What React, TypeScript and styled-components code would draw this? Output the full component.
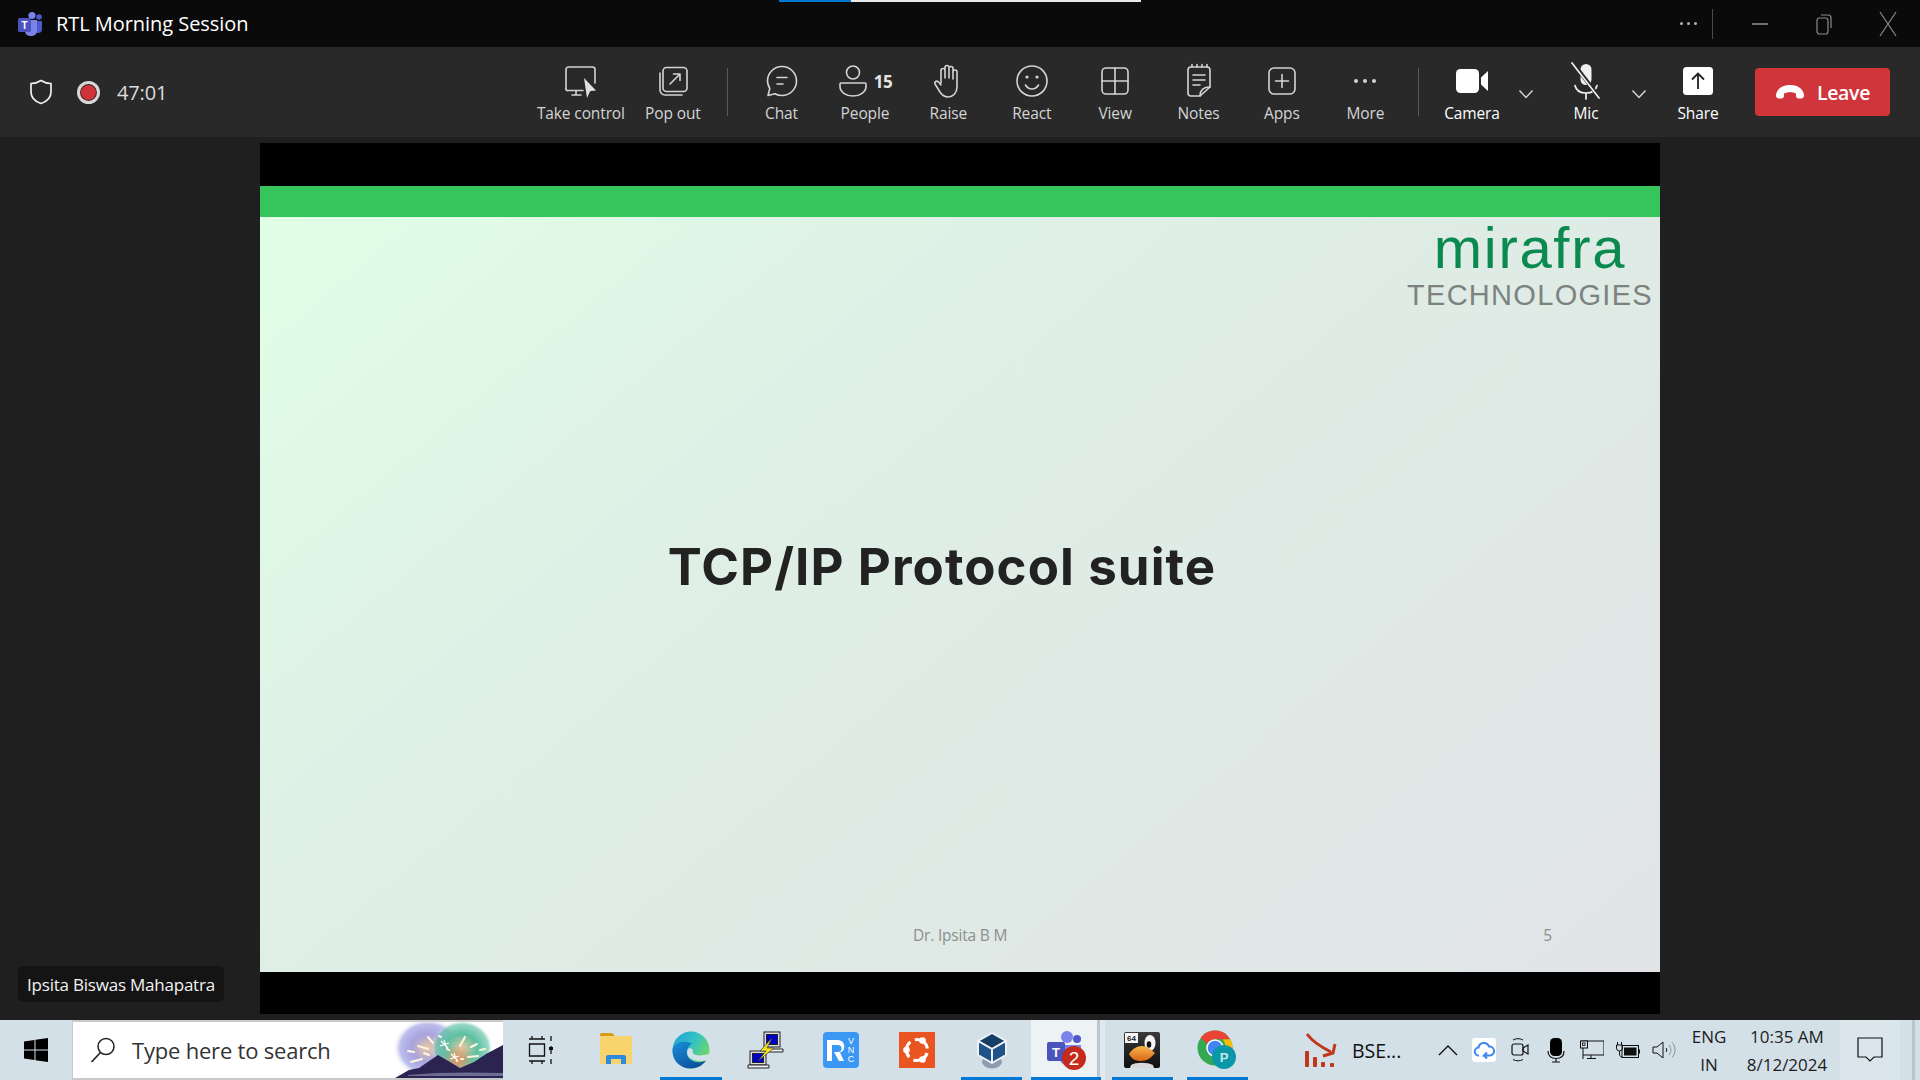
import React from "react";
import styled, { createGlobalStyle } from "styled-components";

const UI_FONT = `"Open Sans", "Noto Sans", "Liberation Sans", sans-serif`;

const GlobalStyle = createGlobalStyle`
  html, body {
    margin: 0;
    padding: 0;
    background: #1f1f1f;
  }
  * {
    box-sizing: border-box;
  }
`;

const Page = styled.div`
  width: 1920px;
  height: 1080px;
  display: flex;
  flex-direction: column;
  overflow: hidden;
  font-family: ${UI_FONT};
`;

const TitleBar = styled.header`
  position: relative;
  height: 47px;
  flex: none;
  display: flex;
  align-items: center;
  padding-left: 17px;
  background: #0a0a0a;
  color: #fff;
`;

const ShareProgress = styled.div`
  position: absolute;
  top: 0;
  left: 779px;
  width: 362px;
  height: 2px;
  background: linear-gradient(to right, #0078d4 0 72px, #e8e8e8 72px);
`;

const TitleText = styled.span`
  margin-left: 13px;
  font-size: 20px;
  letter-spacing: -0.05px;
`;

const WindowControls = styled.div`
  margin-left: auto;
  display: flex;
  align-items: center;
  height: 100%;
`;

const WindowDivider = styled.div`
  width: 1px;
  height: 30px;
  background: #4a4a4a;
  margin: 0 15px 0 14px;
`;

const WindowButton = styled.div<{ $auto?: boolean }>`
  width: ${(p) => (p.$auto ? "auto" : "64px")};
  display: flex;
  justify-content: center;
  align-items: center;
  color: ${(p) => (p.$auto ? "#b0b0b0" : "#8a8a8a")};
`;

const Toolbar = styled.div`
  height: 90px;
  flex: none;
  display: flex;
  align-items: center;
  padding: 0 30px 0 29px;
  background: #292929;
  color: #d4d4d4;
`;

const MeetingInfo = styled.div`
  display: flex;
  align-items: center;
  gap: 17px;
  font-size: 20px;
  letter-spacing: -0.15px;
  color: #dcdcdc;
`;

const RecordDot = styled.div`
  width: 23px;
  height: 23px;
  border-radius: 50%;
  border: 3px solid #d8d8d8;
  background: #d13438;
  margin-left: 7px;
  box-shadow: inset 0 0 0 1px #292929;
`;

const ToolGroup = styled.div`
  margin-left: auto;
  display: flex;
  align-items: stretch;
  height: 72px;
`;

const ToolButton = styled.div<{ $w?: number; $on?: boolean; $pull?: number; $push?: number }>`
  width: ${(p) => p.$w ?? 83.4}px;
  flex: none;
  display: flex;
  flex-direction: column;
  align-items: center;
  margin: 0 ${(p) => p.$pull ?? 0}px 0 ${(p) => p.$push ?? 0}px;
  color: ${(p) => (p.$on ? "#fff" : "#d4d4d4")};
  font-size: 15.5px;
  letter-spacing: -0.12px;
  font-weight: ${(p) => (p.$on ? 500 : 400)};
`;

const ToolIcon = styled.div`
  height: 40px;
  margin-top: 5px;
  display: flex;
  align-items: center;
  justify-content: center;
  gap: 6px;
`;

const ToolLabel = styled.span`
  margin-top: 2px;
  line-height: 20px;
  white-space: nowrap;
`;

const PeopleCount = styled.span`
  font-size: 17px;
  font-weight: 700;
  color: #e4e4e4;
  letter-spacing: -0.4px;
`;

const ToolDivider = styled.div<{ $l: number; $r: number }>`
  width: 1px;
  height: 48px;
  align-self: center;
  background: #5a5a5a;
  margin: 0 ${(p) => p.$r}px 0 ${(p) => p.$l}px;
`;

const Chevron = styled.div<{ $w: number }>`
  width: ${(p) => p.$w}px;
  flex: none;
  display: flex;
  justify-content: center;
  padding-top: 33px;
`;

const LeaveButton = styled.div`
  width: 135px;
  height: 48px;
  margin: 12px 0 0 15px;
  align-self: flex-start;
  display: flex;
  align-items: center;
  justify-content: center;
  gap: 12px;
  border-radius: 4px;
  background: #d0353c;
  color: #fff;
  font-size: 19.5px;
  font-weight: 600;
  letter-spacing: -0.35px;
`;

const Stage = styled.main`
  position: relative;
  flex: 1;
  display: flex;
  justify-content: center;
  padding: 6px 0;
  background: #1f1f1f;
`;

const Slide = styled.section`
  width: 1400px;
  display: flex;
  flex-direction: column;
  background: #000;
  padding: 42px 0;
`;

const GreenBand = styled.div`
  height: 31px;
  flex: none;
  margin-top: 1px;
  background: #36c45c;
`;

const SlideBody = styled.div`
  flex: 1;
  display: flex;
  flex-direction: column;
  background: linear-gradient(140deg, #e0ffe6 0%, #dff0e6 34%, #dfe9e5 68%, #e2e4e8 100%);
`;

const BrandBlock = styled.div`
  align-self: flex-end;
  display: flex;
  flex-direction: column;
  align-items: center;
  padding: 1px 7px 0 0;
  font-family: "Liberation Sans", sans-serif;
`;

const BrandName = styled.div`
  font-size: 58px;
  line-height: 60px;
  letter-spacing: 1.7px;
  color: #0b8a50;
`;

const BrandSub = styled.div`
  font-size: 29px;
  line-height: 34px;
  letter-spacing: 1.3px;
  color: #7d8280;
`;

const SlideTitle = styled.h1`
  margin: 222px 0 0 -36px;
  text-align: center;
  font-family: Inter, Lato, sans-serif;
  font-size: 51px;
  line-height: 66px;
  font-weight: 700;
  letter-spacing: 1.1px;
  color: #222;
`;

const SlideFooter = styled.div`
  margin-top: auto;
  display: flex;
  justify-content: space-between;
  padding: 0 108px 27px 653px;
  font-size: 15.5px;
  line-height: 20px;
  letter-spacing: -0.2px;
  color: #8b8f8e;
`;

const NameTag = styled.div`
  position: absolute;
  left: 18px;
  bottom: 18px;
  height: 36px;
  width: 206px;
  display: flex;
  align-items: center;
  justify-content: center;
  border-radius: 5px;
  background: #141414;
  color: #f2f2f2;
  font-size: 17px;
  letter-spacing: -0.22px;
`;

const Taskbar = styled.footer`
  height: 60px;
  flex: none;
  display: flex;
  align-items: stretch;
  background: #d3e0e8;
  color: #1a1a1a;
`;

const StartButton = styled.div`
  width: 72px;
  flex: none;
  display: flex;
  align-items: center;
  justify-content: center;
`;

const SearchBox = styled.div`
  position: relative;
  width: 431px;
  flex: none;
  display: flex;
  align-items: center;
  padding-left: 17px;
  gap: 16px;
  background: #fff;
  border: 2px solid #c9c9c9;
  border-right: none;
  border-left-width: 1px;
  overflow: hidden;
  color: #333;
  font-size: 22px;
  letter-spacing: -0.2px;
`;

const SearchArt = styled.div`
  position: absolute;
  right: 0;
  top: 0;
  bottom: 0;
  display: flex;
`;

const TaskSlot = styled.div<{ $run?: boolean; $active?: boolean }>`
  position: relative;
  width: 75.2px;
  flex: none;
  display: flex;
  align-items: center;
  justify-content: center;
  background: ${(p) =>
    p.$active
      ? "linear-gradient(to right, transparent 2px, #edf2f5 2px, #edf2f5 68px, #bcc8d0 68px, #bcc8d0 71px, #dfe9ef 71px)"
      : "none"};

  &::after {
    content: "";
    display: ${(p) => (p.$run || p.$active ? "block" : "none")};
    position: absolute;
    left: ${(p) => (p.$active ? 2 : 7)}px;
    right: ${(p) => (p.$active ? 4 : 7)}px;
    bottom: 0;
    height: 3px;
    background: #0078d4;
  }
`;

const BseSlot = styled.div`
  margin-left: 49px;
  display: flex;
  align-items: center;
  gap: 12px;
  font-size: 19.5px;
  color: #111;
`;

const Tray = styled.div`
  margin-left: auto;
  display: flex;
  align-items: stretch;
`;

const TrayIcon = styled.div`
  width: 36px;
  display: flex;
  align-items: center;
  justify-content: center;
`;

const TrayText = styled.div<{ $w: number }>`
  width: ${(p) => p.$w}px;
  display: flex;
  flex-direction: column;
  align-items: center;
  justify-content: center;
  gap: 3px;
  font-size: 17px;
  line-height: 25px;
  color: #1c1c1c;
  letter-spacing: 0;
`;

const NotifyButton = styled.div`
  width: 60px;
  margin-left: 2px;
  display: flex;
  align-items: center;
  justify-content: center;
  background: #dbe6ec;
`;

const DesktopPeek = styled.div`
  width: 20px;
  background: linear-gradient(to right, #d3e0e8 12px, #bac6cd 12px, #bac6cd 15px, #d3e0e8 15px);
`;

const stroke = {
  fill: "none",
  stroke: "currentColor",
  strokeWidth: 1.6,
  strokeLinecap: "round" as const,
  strokeLinejoin: "round" as const,
};

const TeamsLogo = ({ size = 26 }: { size?: number }) => (
  <svg width={size} height={size} viewBox="0 0 26 26">
    <circle cx="15" cy="4.5" r="3.6" fill="#7b83eb" />
    <circle cx="22" cy="6" r="2.8" fill="#5059c9" />
    <path d="M17 10h8v8a4 4 0 0 1-4 4h-1l-3-2z" fill="#5059c9" />
    <path d="M8 9h12v11a5 5 0 0 1-5 5h-2a5 5 0 0 1-5-5z" fill="#7b83eb" />
    <rect x="1" y="7" width="13" height="14" rx="1.5" fill="#4b53bc" />
    <text x="7.5" y="18" textAnchor="middle" fontSize="10" fontWeight="700" fontFamily="Liberation Sans" fill="#fff">T</text>
  </svg>
);

const TakeControlIcon = () => (
  <svg width="36" height="36" viewBox="0 0 36 36">
    <path {...stroke} d="M3 26V6.500A2.500 2.500 0 0 1 5.500 4h24A2.500 2.500 0 0 1 32 6.500V20" />
    <path {...stroke} d="M3 26a1.500 1.500 0 0 0 2 1.500h15M13 27.500V32M9 32h9" />
    <path d="M21 15l12 12.500-5 .5-1 .5L24 35z" fill="#e0e0e0" />
  </svg>
);

const PopOutIcon = () => (
  <svg width="34" height="34" viewBox="0 0 34 34">
    <rect {...stroke} x="7" y="3.500" width="24" height="24" rx="3.500" />
    <path {...stroke} d="M4 9v17a5 5 0 0 0 5 5h17" />
    <path {...stroke} d="M14 20L24 10M17.500 10H24v6.500" />
  </svg>
);

const ChatIcon = () => (
  <svg width="34" height="34" viewBox="0 0 34 34">
    <path {...stroke} d="M17 2.500c8 0 14.500 6.500 14.500 14.500S25 31.500 17 31.500c-2.500 0-5-.6-7-1.800L3 31.500l1.800-7C3.500 22.300 2.500 19.700 2.500 17 2.500 9 9 2.500 17 2.500z" />
    <path {...stroke} d="M12 13.500h10M12 20h6" />
  </svg>
);

const PersonIcon = () => (
  <svg width="30" height="34" viewBox="0 0 30 34">
    <circle {...stroke} cx="15" cy="8.500" r="6.500" />
    <path {...stroke} d="M3 19h24a1 1 0 0 1 1 1v2.500C28 28 22 32 15 32S2 28 2 22.500V20a1 1 0 0 1 1-1z" />
  </svg>
);

const HandIcon = () => (
  <svg width="30" height="36" viewBox="0 0 30 36">
    <path {...stroke} d="M8 20V7.500a2 2 0 0 1 4 0V15M12 15V4.500a2 2 0 0 1 4 0V15M16 15V5.500a2 2 0 0 1 4 0V16M20 16V9a2 2 0 0 1 4 0v15c0 6-4 10-9 10-4 0-6-2-8-5l-5-8c-1-2 1.500-4 3.500-2L8 22" />
  </svg>
);

const SmileIcon = () => (
  <svg width="34" height="34" viewBox="0 0 34 34">
    <circle {...stroke} cx="17" cy="17" r="15" />
    <circle cx="12" cy="13" r="1.600" fill="currentColor" />
    <circle cx="22" cy="13" r="1.600" fill="currentColor" />
    <path {...stroke} d="M10.500 21c1.500 2.500 4 4 6.500 4s5-1.500 6.500-4" />
  </svg>
);

const GridIcon = () => (
  <svg width="32" height="32" viewBox="0 0 32 32">
    <rect {...stroke} x="3" y="3" width="26" height="26" rx="4" />
    <path {...stroke} d="M16 3v26M3 16h26" />
  </svg>
);

const NotesIcon = () => (
  <svg width="30" height="36" viewBox="0 0 30 36">
    <path {...stroke} d="M16 33H7a3 3 0 0 1-3-3V7a3 3 0 0 1 3-3h16a3 3 0 0 1 3 3v17z" />
    <path {...stroke} d="M8 1.500V4M13 1.500V4M18 1.500V4M23 1.500V4M9 12h12M9 17h12M9 22h7M16 33c0-5 3-9 10-9" />
  </svg>
);

const PlusSquareIcon = () => (
  <svg width="32" height="32" viewBox="0 0 32 32">
    <rect {...stroke} x="3" y="3" width="26" height="26" rx="5" />
    <path {...stroke} d="M16 9.500v13M9.500 16h13" />
  </svg>
);

const DotsIcon = ({ r = 2, gap = 9 }: { r?: number; gap?: number }) => (
  <svg width={gap * 2 + r * 2 + 2} height={r * 2 + 2}>
    {[0, 1, 2].map((i) => (
      <circle key={i} cx={r + 1 + i * gap} cy={r + 1} r={r} fill="currentColor" />
    ))}
  </svg>
);

const CameraIcon = () => (
  <svg width="34" height="26" viewBox="0 0 34 26">
    <rect x="1" y="1" width="23" height="24" rx="4.500" fill="#fff" />
    <path d="M26 9.500L33 3v20l-7-6.500z" fill="#fff" />
  </svg>
);

const MicOffIcon = () => (
  <svg width="32" height="38" viewBox="0 0 32 38">
    <rect x="10.500" y="2" width="11" height="21" rx="5.500" fill="#f0f0f0" />
    <path d="M5 23.500C6 28 10 31 16 31s10-3 11-7.500M16 31v6" fill="none" stroke="#f0f0f0" strokeWidth="1.700" strokeLinecap="round" />
    <path d="M3 1l26 34" stroke="#292929" strokeWidth="4" />
    <path d="M2 1l27 35" stroke="#f0f0f0" strokeWidth="1.700" strokeLinecap="round" />
  </svg>
);

const ShareIcon = () => (
  <svg width="32" height="30" viewBox="0 0 32 30">
    <rect x="1" y="1" width="30" height="28" rx="3.500" fill="#fff" />
    <path d="M16 23V8M10 13.500L16 7.500l6 6" fill="none" stroke="#222" strokeWidth="1.800" />
  </svg>
);

const SmallChevron = () => (
  <svg width="16" height="10" viewBox="0 0 16 10">
    <path d="M1.500 1.500L8 8.500l6.500-7" fill="none" stroke="#d8d8d8" strokeWidth="1.400" />
  </svg>
);

const HangUpIcon = () => (
  <svg width="30" height="16" viewBox="0 0 30 16">
    <path d="M1 11C2 4 8 1 15 1s13 3 14 10c.3 2-1 3.500-3 3.500h-2.500c-1.500 0-2.500-1-2.500-2.500V9.500C19 8.500 17 8 15 8s-4 .5-6 1.500V12c0 1.500-1 2.500-2.500 2.500H4c-2 0-3.300-1.500-3-3.500z" fill="#fff" />
  </svg>
);

const ShieldIcon = () => (
  <svg width="24" height="26" viewBox="0 0 24 26">
    <path d="M12 1.500c3 2 6 3 10 3v8.500c0 5.500-4 9.500-10 11.500C6 22.500 2 18.500 2 13V4.500c4 0 7-1 10-3z" fill="none" stroke="#f0f0f0" strokeWidth="1.700" strokeLinejoin="round" />
  </svg>
);

const WindowsLogo = () => (
  <svg width="24" height="24" viewBox="0 0 24 24">
    <path d="M0 3.500l10.500-1.500v9.500H0zM11.500 1.800L24 0v11.500H11.500zM0 12.500h10.500V22L0 20.500zM11.500 12.500H24V24l-12.500-1.800z" fill="#000" />
  </svg>
);

const SearchGlass = () => (
  <svg width="26" height="26" viewBox="0 0 26 26">
    <circle cx="16" cy="9.500" r="8" fill="none" stroke="#222" strokeWidth="1.500" />
    <path d="M10.500 15.500L1.500 25" stroke="#222" strokeWidth="1.700" />
  </svg>
);

const SPARKS = [
  [28, 24, 38, 27],
  [38, 15, 43, 21],
  [21, 40, 32, 37],
  [18, 29, 24, 30],
  [34, 31, 39, 33],
  [70, 24, 75, 15],
  [81, 25, 87, 22],
  [90, 28, 95, 27],
  [78, 35, 88, 34],
  [49, 14, 51, 15],
  [57, 27, 59, 28],
  [71, 37, 73, 37],
];

const SearchIllustration = () => (
  <svg width="113" height="56" viewBox="0 0 113 56">
    <defs>
      <radialGradient id="glowA">
        <stop offset="0" stopColor="#e9c9a5" />
        <stop offset=".45" stopColor="#a9a4dd" />
        <stop offset=".8" stopColor="#8f93de" stopOpacity=".6" />
        <stop offset="1" stopColor="#fff" stopOpacity="0" />
      </radialGradient>
      <radialGradient id="glowB">
        <stop offset="0" stopColor="#e6c9a4" />
        <stop offset=".5" stopColor="#5cc0a0" />
        <stop offset=".85" stopColor="#62c2a8" stopOpacity=".65" />
        <stop offset="1" stopColor="#fff" stopOpacity="0" />
      </radialGradient>
      <radialGradient id="glowC">
        <stop offset="0" stopColor="#f09060" />
        <stop offset="1" stopColor="#f09060" stopOpacity="0" />
      </radialGradient>
    </defs>
    <ellipse cx="38" cy="26" rx="35" ry="30" fill="url(#glowA)" />
    <ellipse cx="72" cy="26" rx="31" ry="28" fill="url(#glowB)" />
    <circle cx="68" cy="38" r="15" fill="url(#glowC)" />
    {SPARKS.map(([x1, y1, x2, y2], i) => (
      <line key={i} x1={x1} y1={y1} x2={x2} y2={y2} stroke="#fff6df" strokeWidth="2" strokeLinecap="round" />
    ))}
    <path d="M54 18l3 9M50 24l9-3M51 19l7 7M64 31l3 9M60 37l9-3M61 32l7 7" stroke="#fff" strokeWidth="1.200" />
    <path d="M5 56l14-8 10-2 19-13 12 7 10 6 14-6 12-8 17-9v33z" fill="#2b2350" />
    <path d="M18 53c30-3 62-3 95-2v3H18z" fill="#6d6c92" />
  </svg>
);

const TaskViewIcon = () => (
  <svg width="26" height="30" viewBox="0 0 26 30">
    <path d="M1 4h16M4 1v3M14 1v3M1.500 9h15v12h-15zM1 26h16M4 26v3M14 26v3" fill="none" stroke="#111" strokeWidth="1.300" />
    <path d="M23 1v5M23 24v5M23 11v8" stroke="#111" strokeWidth="1.300" />
    <rect x="21" y="12" width="4" height="3" fill="#111" />
  </svg>
);

const FolderIcon = () => (
  <svg width="34" height="36" viewBox="0 0 34 36">
    <path d="M1 3a2 2 0 0 1 2-2h10l3 3h-15z" fill="#d99c0e" />
    <rect x="1" y="4" width="32" height="28" rx="2" fill="#f9d36b" />
    <path d="M7 32v-7a2 2 0 0 1 2-2h16a2 2 0 0 1 2 2v7z" fill="#2d8ce0" />
    <rect x="12" y="27" width="10" height="5" fill="#f9d36b" />
  </svg>
);

const EdgeIcon = () => (
  <svg width="38" height="38" viewBox="0 0 38 38">
    <defs>
      <linearGradient id="edgeTop" x1="0" y1="0" x2="1" y2=".6">
        <stop offset="0" stopColor="#1f9fdc" />
        <stop offset=".55" stopColor="#35c3c0" />
        <stop offset="1" stopColor="#74d85f" />
      </linearGradient>
      <linearGradient id="edgeLow" x1="0" y1="0" x2=".7" y2="1">
        <stop offset="0" stopColor="#1a8fd8" />
        <stop offset="1" stopColor="#0b4f9c" />
      </linearGradient>
    </defs>
    <circle cx="19" cy="19" r="18.500" fill="url(#edgeTop)" />
    <path d="M.5 20c0 10 8 17.500 18 17.500 6.500 0 12-3 15.500-8-6 3-13 2-17-2-4-5-2-12 3-15C11 8.500 .5 12 .5 20z" fill="url(#edgeLow)" />
    <path d="M18 20c-1 6 6 9 19 6" fill="none" stroke="#d3e0e8" strokeWidth="5.500" strokeLinecap="round" />
  </svg>
);

const PuttyIcon = () => (
  <svg width="38" height="38" viewBox="0 0 38 38">
    <g stroke="#222" strokeWidth="1">
      <rect x="17" y="1" width="16" height="15" fill="#dcdcdc" />
      <rect x="19.500" y="3.500" width="11" height="10" fill="#0000c8" />
      <path d="M15 18h21v3H15z" fill="#eee" />
      <rect x="3" y="20" width="16" height="14" fill="#dcdcdc" />
      <rect x="5.500" y="22.500" width="11" height="9" fill="#0000c8" />
      <path d="M1 34h21v3H1z" fill="#eee" />
    </g>
    <path d="M25 7L13 20h6L11 30l16-13h-7l5-10z" fill="#f5e11d" stroke="#333" strokeWidth=".6" />
  </svg>
);

const RvncIcon = () => (
  <svg width="36" height="36" viewBox="0 0 36 36">
    <rect width="36" height="36" rx="4" fill="#3a97f4" />
    <path d="M4 8h11a6.500 6.500 0 0 1 2 12.600L21 29h-5l-5-9h4a2 2 0 0 0 0-7H9v16H4z" fill="#fff" />
    <text x="28" y="12" textAnchor="middle" fontSize="9" fontFamily="Liberation Sans" fill="#fff">V</text>
    <text x="28" y="21" textAnchor="middle" fontSize="9" fontFamily="Liberation Sans" fill="#fff">N</text>
    <text x="28" y="30" textAnchor="middle" fontSize="9" fontFamily="Liberation Sans" fill="#fff">C</text>
  </svg>
);

const UbuntuIcon = () => (
  <svg width="36" height="36" viewBox="0 0 36 36">
    <rect width="36" height="36" fill="#e95420" />
    <circle cx="18" cy="18" r="10.500" fill="none" stroke="#fff" strokeWidth="3.200" strokeDasharray="17 5" strokeDashoffset="-3" />
    <circle cx="7.500" cy="18" r="3.300" fill="#fff" />
    <circle cx="23.500" cy="8.500" r="3.300" fill="#fff" />
    <circle cx="23.500" cy="27.500" r="3.300" fill="#fff" />
  </svg>
);

const VirtualBoxIcon = () => (
  <svg width="32" height="38" viewBox="0 0 32 38">
    <ellipse cx="16" cy="31" rx="10" ry="6.500" fill="#8f9cad" />
    <path d="M16 2l14 8v14l-14 8-14-8V10z" fill="#1c4a7a" />
    <path d="M16 2l14 8-14 8-14-8z" fill="#173c66" stroke="#eef2f5" strokeWidth="2" strokeLinejoin="round" />
    <path d="M2 10l14 8v14L2 24zM30 10l-14 8v14l14-8z" fill="#1f5488" stroke="#eef2f5" strokeWidth="2" strokeLinejoin="round" />
  </svg>
);

const TeamsTaskIcon = () => (
  <svg width="40" height="40" viewBox="0 0 40 40">
    <circle cx="20" cy="7" r="6" fill="#7b83eb" />
    <circle cx="30" cy="9" r="4" fill="#5059c9" />
    <path d="M12 15h22v12a8 8 0 0 1-8 8h-6a8 8 0 0 1-8-8z" fill="#7b83eb" />
    <rect x="0" y="12" width="18" height="19" rx="2" fill="#4b53bc" />
    <text x="9" y="26.500" textAnchor="middle" fontSize="13" fontWeight="700" fontFamily="Liberation Sans" fill="#fff">T</text>
    <circle cx="27" cy="28" r="12" fill="#c42b1c" />
    <text x="27" y="35" textAnchor="middle" fontSize="19" fontFamily="Liberation Sans" fill="#fff">2</text>
  </svg>
);

const TuxIcon = () => (
  <svg width="36" height="36" viewBox="0 0 36 36">
    <defs>
      <linearGradient id="tuxBg" x1="0" y1="0" x2="0" y2="1">
        <stop offset="0" stopColor="#3a3a3a" />
        <stop offset="1" stopColor="#0e0e0e" />
      </linearGradient>
      <linearGradient id="tuxBeak" x1="0" y1="0" x2="0" y2="1">
        <stop offset="0" stopColor="#f7b84a" />
        <stop offset="1" stopColor="#d9661a" />
      </linearGradient>
    </defs>
    <rect width="36" height="36" rx="2" fill="url(#tuxBg)" />
    <ellipse cx="26" cy="11" rx="5.500" ry="8" fill="#f4f4f4" />
    <ellipse cx="25" cy="12.500" rx="2.300" ry="3.300" fill="#111" />
    <path d="M5 22c3-5 8-8 13-8s8 3 13 7c-4 5-8 8-14 8S8 27 5 22z" fill="url(#tuxBeak)" />
    <path d="M7 33c5-3 16-3 22 0l1 3H6z" fill="#d8d8d8" />
    <rect x="1" y="1" width="13" height="10" fill="#f5f5f5" />
    <text x="7.500" y="9" textAnchor="middle" fontSize="8" fontWeight="700" fontFamily="Liberation Sans" fill="#222">64</text>
  </svg>
);

const ChromeIcon = () => (
  <svg width="40" height="40" viewBox="0 0 40 40">
    <circle cx="18" cy="18" r="17.500" fill="#34a853" />
    <path d="M18 .5A17.500 17.500 0 0 1 33.200 9.300H18a9 9 0 0 0-8 4.500L3.600 8A17.500 17.500 0 0 1 18 .5z" fill="#ea4335" />
    <path d="M33.200 9.300A17.500 17.500 0 0 1 18 35.500l7.500-13a9 9 0 0 0 .3-13z" fill="#fbbc05" />
    <circle cx="18" cy="18" r="8" fill="#4285f4" stroke="#fff" strokeWidth="1.500" />
    <circle cx="27" cy="27" r="12" fill="#0a98a8" />
    <text x="27" y="32" textAnchor="middle" fontSize="13" fontWeight="700" fontFamily="Liberation Sans" fill="#c9e6ea">P</text>
  </svg>
);

const BseIcon = () => (
  <svg width="36" height="36" viewBox="0 0 36 36">
    <path d="M3 2c5 7 12 12 24 18" fill="none" stroke="#c2361b" strokeWidth="3" />
    <path d="M19 24l10-3 2-9" fill="none" stroke="#c2361b" strokeWidth="3" />
    <rect x="1" y="19" width="4" height="16" rx="1" fill="#c2361b" />
    <rect x="9" y="25" width="4" height="10" rx="1" fill="#c2361b" />
    <rect x="17" y="30" width="4" height="5" rx="1" fill="#c2361b" />
    <rect x="26" y="31" width="4" height="4" rx="1" fill="#c2361b" />
  </svg>
);

const ChevronUp = () => (
  <svg width="20" height="12" viewBox="0 0 20 12">
    <path d="M1 11L10 2l9 9" fill="none" stroke="#111" strokeWidth="1.400" />
  </svg>
);

const CloudIcon = () => (
  <svg width="24" height="24" viewBox="0 0 24 24">
    <rect width="24" height="24" rx="3" fill="#fff" />
    <path d="M7 17.500a4 4 0 0 1-.5-8 5.500 5.500 0 0 1 10.500-1 4.500 4.500 0 0 1 1 9H12l3-3M12 17.500l3 3" fill="none" stroke="#3f86ee" strokeWidth="2" />
  </svg>
);

const VideoTrayIcon = () => (
  <svg width="18" height="24" viewBox="0 0 18 24" overflow="visible">
    <rect x="1" y="6" width="11" height="11" rx="2" fill="none" stroke="#111" strokeWidth="1.200" />
    <path d="M12 10l5-3v9l-5-3z" fill="none" stroke="#111" strokeWidth="1.200" />
    <path d="M2 2c3-1.800 7-1.800 10 0M2 21.500c3 1.800 7 1.800 10 0" fill="none" stroke="#111" strokeWidth="1" />
  </svg>
);

const MicTrayIcon = () => (
  <svg width="18" height="26" viewBox="0 0 18 26">
    <rect x="3" y="1" width="12" height="18" rx="4.500" fill="#000" />
    <path d="M1 14c0 5 3 7.500 8 7.500s8-2.500 8-7.500M9 21.500V25M5 25h8" fill="none" stroke="#111" strokeWidth="1.200" />
  </svg>
);

const NetworkTrayIcon = () => (
  <svg width="24" height="20" viewBox="0 0 24 20">
    <path d="M1 1h23v14H3M3 8v11M11 15v3M7 18.500h9" fill="none" stroke="#111" strokeWidth="1" />
    <rect x="0.500" y="1" width="7" height="7" fill="#d3e0e8" stroke="#111" strokeWidth="1" />
    <rect x="2.500" y="3" width="2.500" height="2.500" fill="none" stroke="#111" strokeWidth=".8" />
  </svg>
);

const BatteryTrayIcon = () => (
  <svg width="24" height="18" viewBox="0 0 24 18">
    <path d="M1.500 1v3M5.500 1v3M0.500 4h6v3a3 3 0 0 1-6 0zM3.500 10v3c0 2 1 3 3 3" fill="none" stroke="#111" strokeWidth="1" />
    <rect x="6" y="4.500" width="16.500" height="12" fill="none" stroke="#111" strokeWidth="1" />
    <rect x="8" y="6.500" width="12.500" height="8" fill="#111" />
    <rect x="23" y="8.500" width="1" height="4" fill="#111" />
  </svg>
);

const SpeakerTrayIcon = () => (
  <svg width="24" height="20" viewBox="0 0 24 20">
    <path d="M1 7v6h4l6 5V2L5 7z" fill="none" stroke="#111" strokeWidth="1" />
    <path d="M14 8c1 1 1 3 0 4" fill="none" stroke="#111" strokeWidth="1" />
    <path d="M17 5c2.500 3 2.500 7 0 10M20 2.500c4 4 4 11 0 15" fill="none" stroke="#8a9297" strokeWidth="1" />
  </svg>
);

const NotifyIcon = () => (
  <svg width="26" height="26" viewBox="0 0 26 26">
    <path d="M1 1h24v19H17l-4 4-4-4H1z" fill="none" stroke="#111" strokeWidth="1.200" />
  </svg>
);

export default function App() {
  return (
    <Page>
      <GlobalStyle />
      <TitleBar>
        <ShareProgress />
        <TeamsLogo />
        <TitleText>RTL Morning Session</TitleText>
        <WindowControls>
          <WindowButton $auto>
            <DotsIcon r={1.5} gap={7} />
          </WindowButton>
          <WindowDivider />
          <WindowButton>
            <svg width="16" height="2"><rect width="16" height="2" fill="#6e6e6e" /></svg>
          </WindowButton>
          <WindowButton>
            <svg width="16" height="24" viewBox="0 0 16 24">
              <rect x="1" y="6" width="11" height="16" rx="2.500" fill="none" stroke="#8a8a8a" strokeWidth="1.200" />
              <path d="M5 3h7a3 3 0 0 1 3 3v10" fill="none" stroke="#8a8a8a" strokeWidth="1.200" />
            </svg>
          </WindowButton>
          <WindowButton>
            <svg width="18" height="26" viewBox="0 0 18 26">
              <path d="M1 1l16 24M17 1L1 25" stroke="#8a8a8a" strokeWidth="1.200" />
            </svg>
          </WindowButton>
        </WindowControls>
      </TitleBar>

      <Toolbar>
        <MeetingInfo>
          <ShieldIcon />
          <RecordDot />
          <span>47:01</span>
        </MeetingInfo>
        <ToolGroup>
          <ToolButton $w={92}><ToolIcon><TakeControlIcon /></ToolIcon><ToolLabel>Take control</ToolLabel></ToolButton>
          <ToolButton $w={92}><ToolIcon><PopOutIcon /></ToolIcon><ToolLabel>Pop out</ToolLabel></ToolButton>
          <ToolDivider $l={8} $r={12} />
          <ToolButton><ToolIcon><ChatIcon /></ToolIcon><ToolLabel>Chat</ToolLabel></ToolButton>
          <ToolButton>
            <ToolIcon><PersonIcon /><PeopleCount>15</PeopleCount></ToolIcon>
            <ToolLabel>People</ToolLabel>
          </ToolButton>
          <ToolButton><ToolIcon><HandIcon /></ToolIcon><ToolLabel>Raise</ToolLabel></ToolButton>
          <ToolButton><ToolIcon><SmileIcon /></ToolIcon><ToolLabel>React</ToolLabel></ToolButton>
          <ToolButton><ToolIcon><GridIcon /></ToolIcon><ToolLabel>View</ToolLabel></ToolButton>
          <ToolButton><ToolIcon><NotesIcon /></ToolIcon><ToolLabel>Notes</ToolLabel></ToolButton>
          <ToolButton><ToolIcon><PlusSquareIcon /></ToolIcon><ToolLabel>Apps</ToolLabel></ToolButton>
          <ToolButton><ToolIcon><DotsIcon /></ToolIcon><ToolLabel>More</ToolLabel></ToolButton>
          <ToolDivider $l={11} $r={11} />
          <ToolButton $w={84} $on><ToolIcon><CameraIcon /></ToolIcon><ToolLabel>Camera</ToolLabel></ToolButton>
          <Chevron $w={24}><SmallChevron /></Chevron>
          <ToolButton $w={96} $on $pull={-6}><ToolIcon><MicOffIcon /></ToolIcon><ToolLabel>Mic</ToolLabel></ToolButton>
          <Chevron $w={22}><SmallChevron /></Chevron>
          <ToolButton $w={84} $on $push={6}><ToolIcon><ShareIcon /></ToolIcon><ToolLabel>Share</ToolLabel></ToolButton>
          <LeaveButton><HangUpIcon />Leave</LeaveButton>
        </ToolGroup>
      </Toolbar>

      <Stage>
        <Slide>
          <GreenBand />
          <SlideBody>
            <BrandBlock>
              <BrandName>mirafra</BrandName>
              <BrandSub>TECHNOLOGIES</BrandSub>
            </BrandBlock>
            <SlideTitle>TCP/IP Protocol suite</SlideTitle>
            <SlideFooter>
              <span>Dr. Ipsita B M</span>
              <span>5</span>
            </SlideFooter>
          </SlideBody>
        </Slide>
        <NameTag>Ipsita Biswas Mahapatra</NameTag>
      </Stage>

      <Taskbar>
        <StartButton><WindowsLogo /></StartButton>
        <SearchBox>
          <SearchGlass />
          <span>Type here to search</span>
          <SearchArt><SearchIllustration /></SearchArt>
        </SearchBox>
        <TaskSlot><TaskViewIcon /></TaskSlot>
        <TaskSlot><FolderIcon /></TaskSlot>
        <TaskSlot $run><EdgeIcon /></TaskSlot>
        <TaskSlot><PuttyIcon /></TaskSlot>
        <TaskSlot><RvncIcon /></TaskSlot>
        <TaskSlot><UbuntuIcon /></TaskSlot>
        <TaskSlot $run><VirtualBoxIcon /></TaskSlot>
        <TaskSlot $active><TeamsTaskIcon /></TaskSlot>
        <TaskSlot $run><TuxIcon /></TaskSlot>
        <TaskSlot $run><ChromeIcon /></TaskSlot>
        <BseSlot><BseIcon /><span>BSE...</span></BseSlot>
        <Tray>
          <TrayIcon><ChevronUp /></TrayIcon>
          <TrayIcon><CloudIcon /></TrayIcon>
          <TrayIcon><VideoTrayIcon /></TrayIcon>
          <TrayIcon><MicTrayIcon /></TrayIcon>
          <TrayIcon><NetworkTrayIcon /></TrayIcon>
          <TrayIcon><BatteryTrayIcon /></TrayIcon>
          <TrayIcon><SpeakerTrayIcon /></TrayIcon>
          <TrayText $w={54}><span>ENG</span><span>IN</span></TrayText>
          <TrayText $w={102}><span>10:35 AM</span><span>8/12/2024</span></TrayText>
          <NotifyButton><NotifyIcon /></NotifyButton>
          <DesktopPeek />
        </Tray>
      </Taskbar>
    </Page>
  );
}
